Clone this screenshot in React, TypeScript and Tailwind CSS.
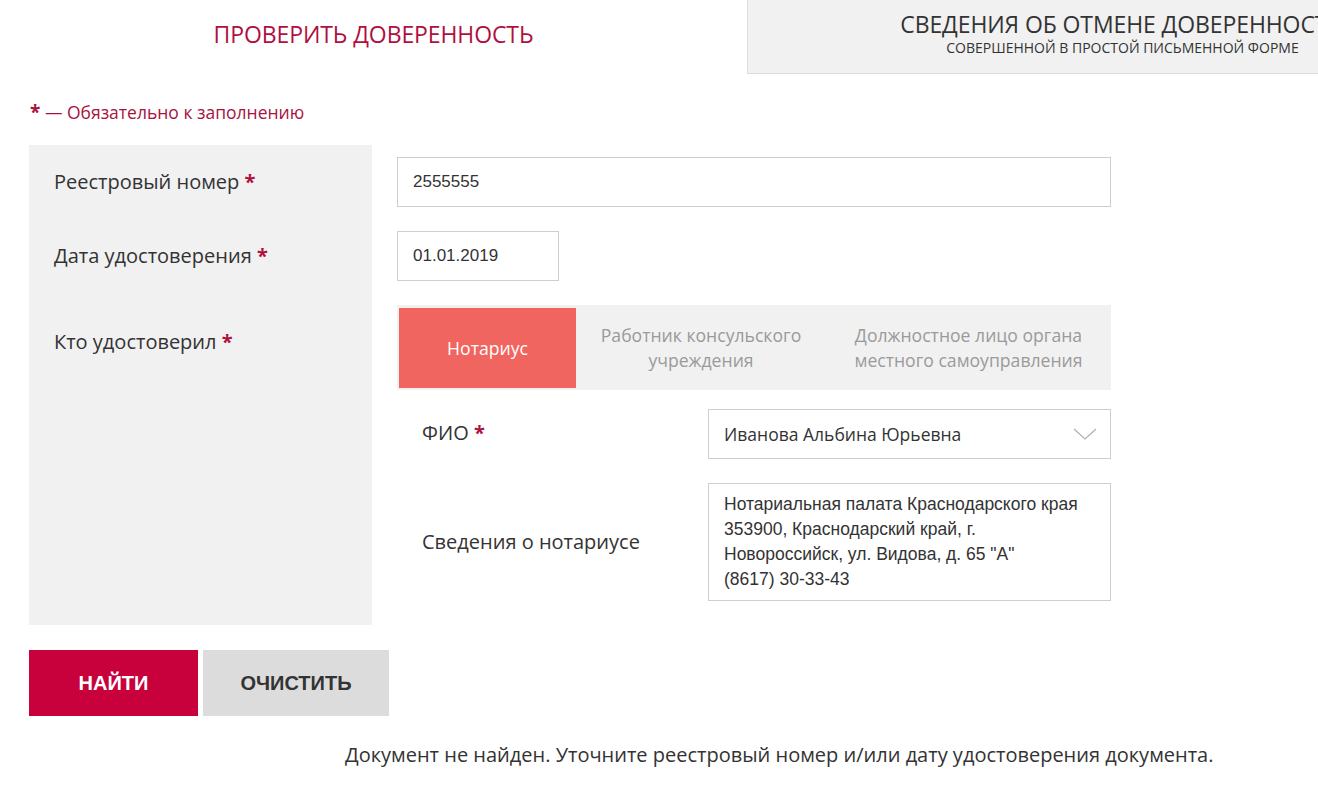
import React from "react";

const Star = () => <span className="text-[#b0103f] font-bold">*</span>;

export default function App() {
  return (
    <div className="w-[1318px] h-[794px] overflow-hidden bg-white text-[#333] font-['Open_Sans',sans-serif]">
      {/* Tabs */}
      <div className="flex">
        <div className="w-[747px] shrink-0 h-[74px] flex items-center justify-center pb-[6px]">
          <span className="text-[23px] text-[#b0103f] tracking-[-0.1px]">ПРОВЕРИТЬ ДОВЕРЕННОСТЬ</span>
        </div>
        <div className="w-[750px] shrink-0 h-[74px] bg-[#f1f1f1] border-l border-b border-[#dcdcdc] flex flex-col items-center justify-center gap-[2px] pb-[6px]">
          <span className="text-[23px] leading-[26px] text-[#333] whitespace-nowrap tracking-[-0.1px]">СВЕДЕНИЯ ОБ ОТМЕНЕ ДОВЕРЕННОСТИ</span>
          <span className="text-[14px] leading-[18px] text-[#333] whitespace-nowrap">СОВЕРШЕННОЙ В ПРОСТОЙ ПИСЬМЕННОЙ ФОРМЕ</span>
        </div>
      </div>

      {/* Required note */}
      <div className="pl-[30px] mt-[26px] text-[17.5px] leading-[24px] text-[#a8123e]">
        <span className="font-bold text-[19px]">*</span> — Обязательно к заполнению
      </div>

      {/* Form */}
      <div className="flex ml-[29px] mt-[21px] gap-[25px]">
        <div className="w-[343px] h-[480px] bg-[#f1f1f1] pl-[25px] pt-[12px] text-[20px]">
          <div className="h-[50px] flex items-center">
            <span>Реестровый номер <Star /></span>
          </div>
          <div className="h-[50px] mt-[24px] flex items-center">
            <span>Дата удостоверения <Star /></span>
          </div>
          <div className="mt-[47px] leading-[28px]">
            <span>Кто удостоверил <Star /></span>
          </div>
        </div>

        <div className="w-[714px] pt-[12px]">
          <div className="h-[50px] border border-[#cfcfcf] flex items-center px-[15px] text-[17px] font-['Liberation_Sans',Arial,sans-serif]">
            2555555
          </div>
          <div className="h-[50px] w-[162px] mt-[24px] border border-[#cfcfcf] flex items-center px-[15px] text-[17px] font-['Liberation_Sans',Arial,sans-serif]">
            01.01.2019
          </div>
          <div className="mt-[24px] h-[85px] bg-[#f1f1f1] flex pl-[2px] pt-[3px] pb-[2px] text-[17.6px] leading-[25px]">
            <div className="w-[177px] bg-[#f0655f] text-white flex items-center justify-center">Нотариус</div>
            <div className="w-[250px] flex items-center justify-center text-center text-[#9a9a9a]">
              Работник консульского<br />учреждения
            </div>
            <div className="flex-1 flex items-center justify-center text-center text-[#9a9a9a]">
              Должностное лицо органа<br />местного самоуправления
            </div>
          </div>

          <div className="flex mt-[19px] pl-[25px]">
            <div className="w-[286px] text-[20px] pt-[10px] leading-[28px]">
              ФИО <Star />
            </div>
            <div className="w-[403px] h-[50px] border border-[#cfcfcf] flex items-center justify-between pl-[15px] pr-[13px] text-[17.5px]">
              <span>Иванова Альбина Юрьевна</span>
              <svg width="24" height="12" viewBox="0 0 24 12" fill="none">
                <path d="M1 1 L12 11 L23 1" stroke="#b0b0b0" strokeWidth="1.2" />
              </svg>
            </div>
          </div>

          <div className="flex mt-[24px] pl-[25px]">
            <div className="w-[286px] text-[20px] flex items-center">Сведения о нотариусе</div>
            <div className="w-[403px] h-[118px] border border-[#cfcfcf] px-[15px] pt-[8px] text-[17.5px] leading-[25px] font-['Liberation_Sans',Arial,sans-serif] whitespace-nowrap">
              Нотариальная палата Краснодарского края<br />
              353900, Краснодарский край, г.<br />
              Новороссийск, ул. Видова, д. 65 "А"<br />
              (8617) 30-33-43
            </div>
          </div>
        </div>
      </div>

      {/* Buttons */}
      <div className="flex ml-[29px] mt-[25px] gap-[5px] font-['Liberation_Sans',Arial,sans-serif] font-bold text-[20px]">
        <button className="w-[169px] h-[66px] bg-[#c8003c] text-white">НАЙТИ</button>
        <button className="w-[186px] h-[66px] bg-[#dcdcdc] text-[#333]">ОЧИСТИТЬ</button>
      </div>

      <div className="pl-[345px] mt-[25px] text-[20px] leading-[28px] whitespace-nowrap">
        Документ не найден. Уточните реестровый номер и/или дату удостоверения документа.
      </div>
    </div>
  );
}
